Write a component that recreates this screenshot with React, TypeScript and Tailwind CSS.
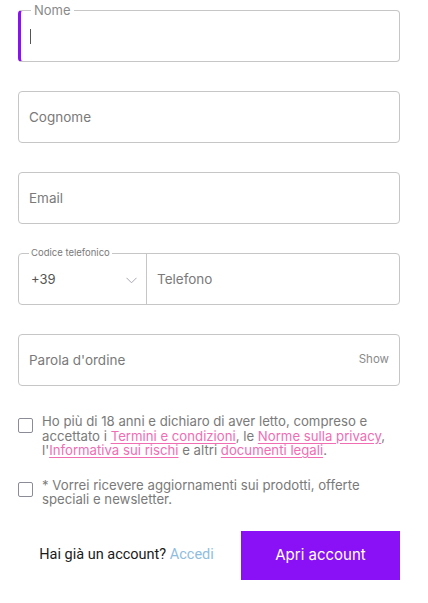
import { useState } from "react"

const font = { fontFamily: "Inter, 'Open Sans', sans-serif" }

function TextField({ placeholder, right }: { placeholder: string; right?: string }) {
  return (
    <div className="flex h-[52px] items-center rounded-[4px] border border-[#c6c6c6] px-[10px]">
      <input
        placeholder={placeholder}
        className="w-full bg-transparent text-[13.5px] text-[#333] outline-none placeholder:text-[#7a7a7a]"
      />
      {right && <span className="text-[11.5px] text-[#8a8a8a]">{right}</span>}
    </div>
  )
}

function Check({ children }: { children: React.ReactNode }) {
  const [on, setOn] = useState(false)
  return (
    <label className="flex items-start gap-[9px]">
      <button
        type="button"
        onClick={() => setOn(!on)}
        className="mt-[4px] h-[15px] w-[15px] shrink-0 rounded-[2px] border-[1.5px] border-[#8c8c96] bg-white"
      />
      <span className="text-[13.2px] leading-[14.5px] text-[#7a7a7a]">{children}</span>
    </label>
  )
}

const linkCls = "text-[#f06db4] underline underline-offset-2"

export default function App() {
  return (
    <div className="min-h-[603px] bg-white px-[18px] pt-[10px] pr-[28px]" style={font}>
      <div className="relative flex h-[52px] items-center rounded-[4px] border border-[#c6c6c6] border-l-[3px] border-l-[#8a10f5] pl-[9px]">
        <span className="absolute -top-[9px] left-[10px] bg-white px-[3px] text-[13px] leading-[16px] text-[#8a8a8a]">
          Nome
        </span>
        <div className="h-[15px] w-px bg-[#555]" />
      </div>

      <div className="mt-[29px]">
        <TextField placeholder="Cognome" />
      </div>
      <div className="mt-[29px]">
        <TextField placeholder="Email" />
      </div>

      <div className="relative mt-[29px] flex h-[52px] rounded-[4px] border border-[#c6c6c6]">
        <span className="absolute -top-[7px] left-[10px] bg-white px-[2px] text-[9.5px] leading-[12px] text-[#7a7a7a]">
          Codice telefonico
        </span>
        <div className="flex w-[128px] items-center justify-between border-r border-[#c6c6c6] pl-[12px] pr-[9px] pt-[2px]">
          <span className="text-[13px] text-[#555]">+39</span>
          <svg width="11" height="7" viewBox="0 0 11 7" fill="none">
            <path d="M0.5 0.8 L5.5 5.8 L10.5 0.8" stroke="#a8a8b4" strokeWidth="1" />
          </svg>
        </div>
        <div className="flex flex-1 items-center px-[10px]">
          <input placeholder="Telefono" className="w-full text-[13.5px] outline-none placeholder:text-[#7a7a7a]" />
        </div>
      </div>

      <div className="mt-[29px]">
        <TextField placeholder="Parola d'ordine" right="Show" />
      </div>

      <div className="mt-[28px] space-y-[20px]">
        <Check>
          Ho più di 18 anni e dichiaro di aver letto, compreso e<br />
          accettato i <a className={linkCls}>Termini e condizioni</a>, le{" "}
          <a className={linkCls}>Norme sulla privacy</a>,<br />
          l'<a className={linkCls}>Informativa sui rischi</a> e altri{" "}
          <a className={linkCls}>documenti legali</a>.
        </Check>
        <Check>
          * Vorrei ricevere aggiornamenti sui prodotti, offerte
          <br />
          speciali e newsletter.
        </Check>
      </div>

      <div className="mt-[24px] flex items-center">
        <div className="flex-1 pr-[6px] text-center text-[14.5px] text-[#1a1a1a]" style={{ fontFamily: "Roboto, sans-serif" }}>
          Hai già un account? <a className="text-[#8fbde0]">Accedi</a>
        </div>
        <button className="h-[49px] w-[159px] bg-[#8a10f5] text-[15px] text-white">Apri account</button>
      </div>
    </div>
  )
}
